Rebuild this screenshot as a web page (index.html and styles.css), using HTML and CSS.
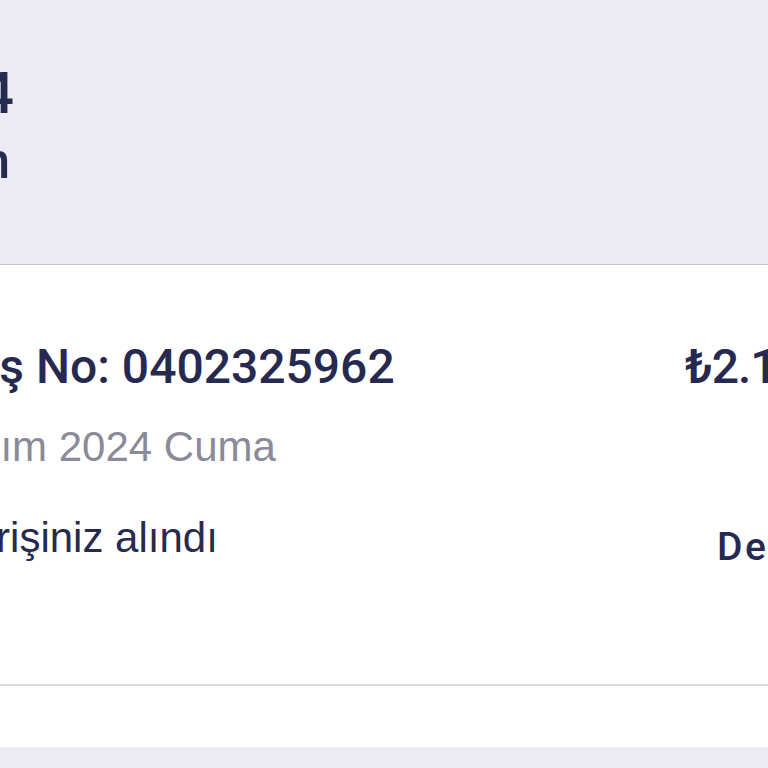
FILE: index.html
```html
<!DOCTYPE html>
<html lang="tr">
<head>
<meta charset="utf-8">
<title>Siparişlerim</title>
<link rel="stylesheet" href="styles.css">
</head>
<body>
<header class="month-header">
  <div class="title-block">
    <h1 class="month-title">Kasım 2024</h1>
    <p class="month-sub">1 sipariş verdin</p>
  </div>
</header>
<section class="order">
  <div class="order-row first">
    <div class="order-no">Sipariş No: 0402325962</div>
    <div class="price">₺2.150,00</div>
  </div>
  <div class="order-row">
    <div class="order-date">1 Kasım 2024 Cuma</div>
  </div>
  <div class="order-row status-row">
    <div class="status">Siparişiniz alındı</div>
    <div class="details">Detaylar</div>
  </div>
</section>
<div class="gap"></div>
<div class="next-header"></div>
</body>
</html>
```
FILE: styles.css
```css
html, body {
  margin: 0;
  padding: 0;
  overflow: hidden;
  background: #ffffff;
  font-family: "Liberation Sans", Arial, sans-serif;
  color: #262a50;
}

.month-header {
  background: #ecebf4;
  border-bottom: 1px solid #c7c6ce;
  padding-top: 65px;
  height: 199px;
}

.title-block {
  width: 14px;
  display: flex;
  flex-direction: column;
  align-items: flex-end;
}

.month-title {
  margin: 0;
  font-family: Roboto, "Liberation Sans", sans-serif;
  font-size: 57px;
  line-height: 57px;
  font-weight: 500;
  white-space: nowrap;
}

.month-sub {
  margin: 14px 4px 0 0;
  font-family: Roboto, "Liberation Sans", sans-serif;
  font-size: 50px;
  line-height: 50px;
  font-weight: 500;
  white-space: nowrap;
}

.order {
  height: 421px;
  box-sizing: border-box;
  padding-top: 78px;
  border-bottom: 2px solid #dadada;
  background: #fff;
}

.order-row {
  display: grid;
  grid-template-columns: 685px 1fr;
  white-space: nowrap;
}

.order-no {
  font-family: Roboto, "Liberation Sans", sans-serif;
  font-size: 48px;
  line-height: 48px;
  font-weight: 500;
  text-indent: -124px;
}

.price {
  font-family: Roboto, "DejaVu Sans", sans-serif;
  font-size: 48px;
  line-height: 48px;
  font-weight: 500;
  letter-spacing: -1px;
}

.order-date {
  margin-top: 35px;
  font-size: 42px;
  line-height: 42px;
  color: #8b8a98;
  text-indent: -107px;
}

.status-row {
  margin-top: 49px;
}

.status {
  font-size: 42px;
  line-height: 42px;
  text-indent: -88px;
}

.details {
  margin-top: 11px;
  padding-left: 32px;
  font-family: Roboto, "Liberation Sans", sans-serif;
  font-size: 39px;
  line-height: 39px;
  font-weight: 500;
  letter-spacing: 2.5px;
}

.gap {
  height: 61px;
  background: #fff;
}

.next-header {
  height: 40px;
  background: #ecebf4;
}
```
